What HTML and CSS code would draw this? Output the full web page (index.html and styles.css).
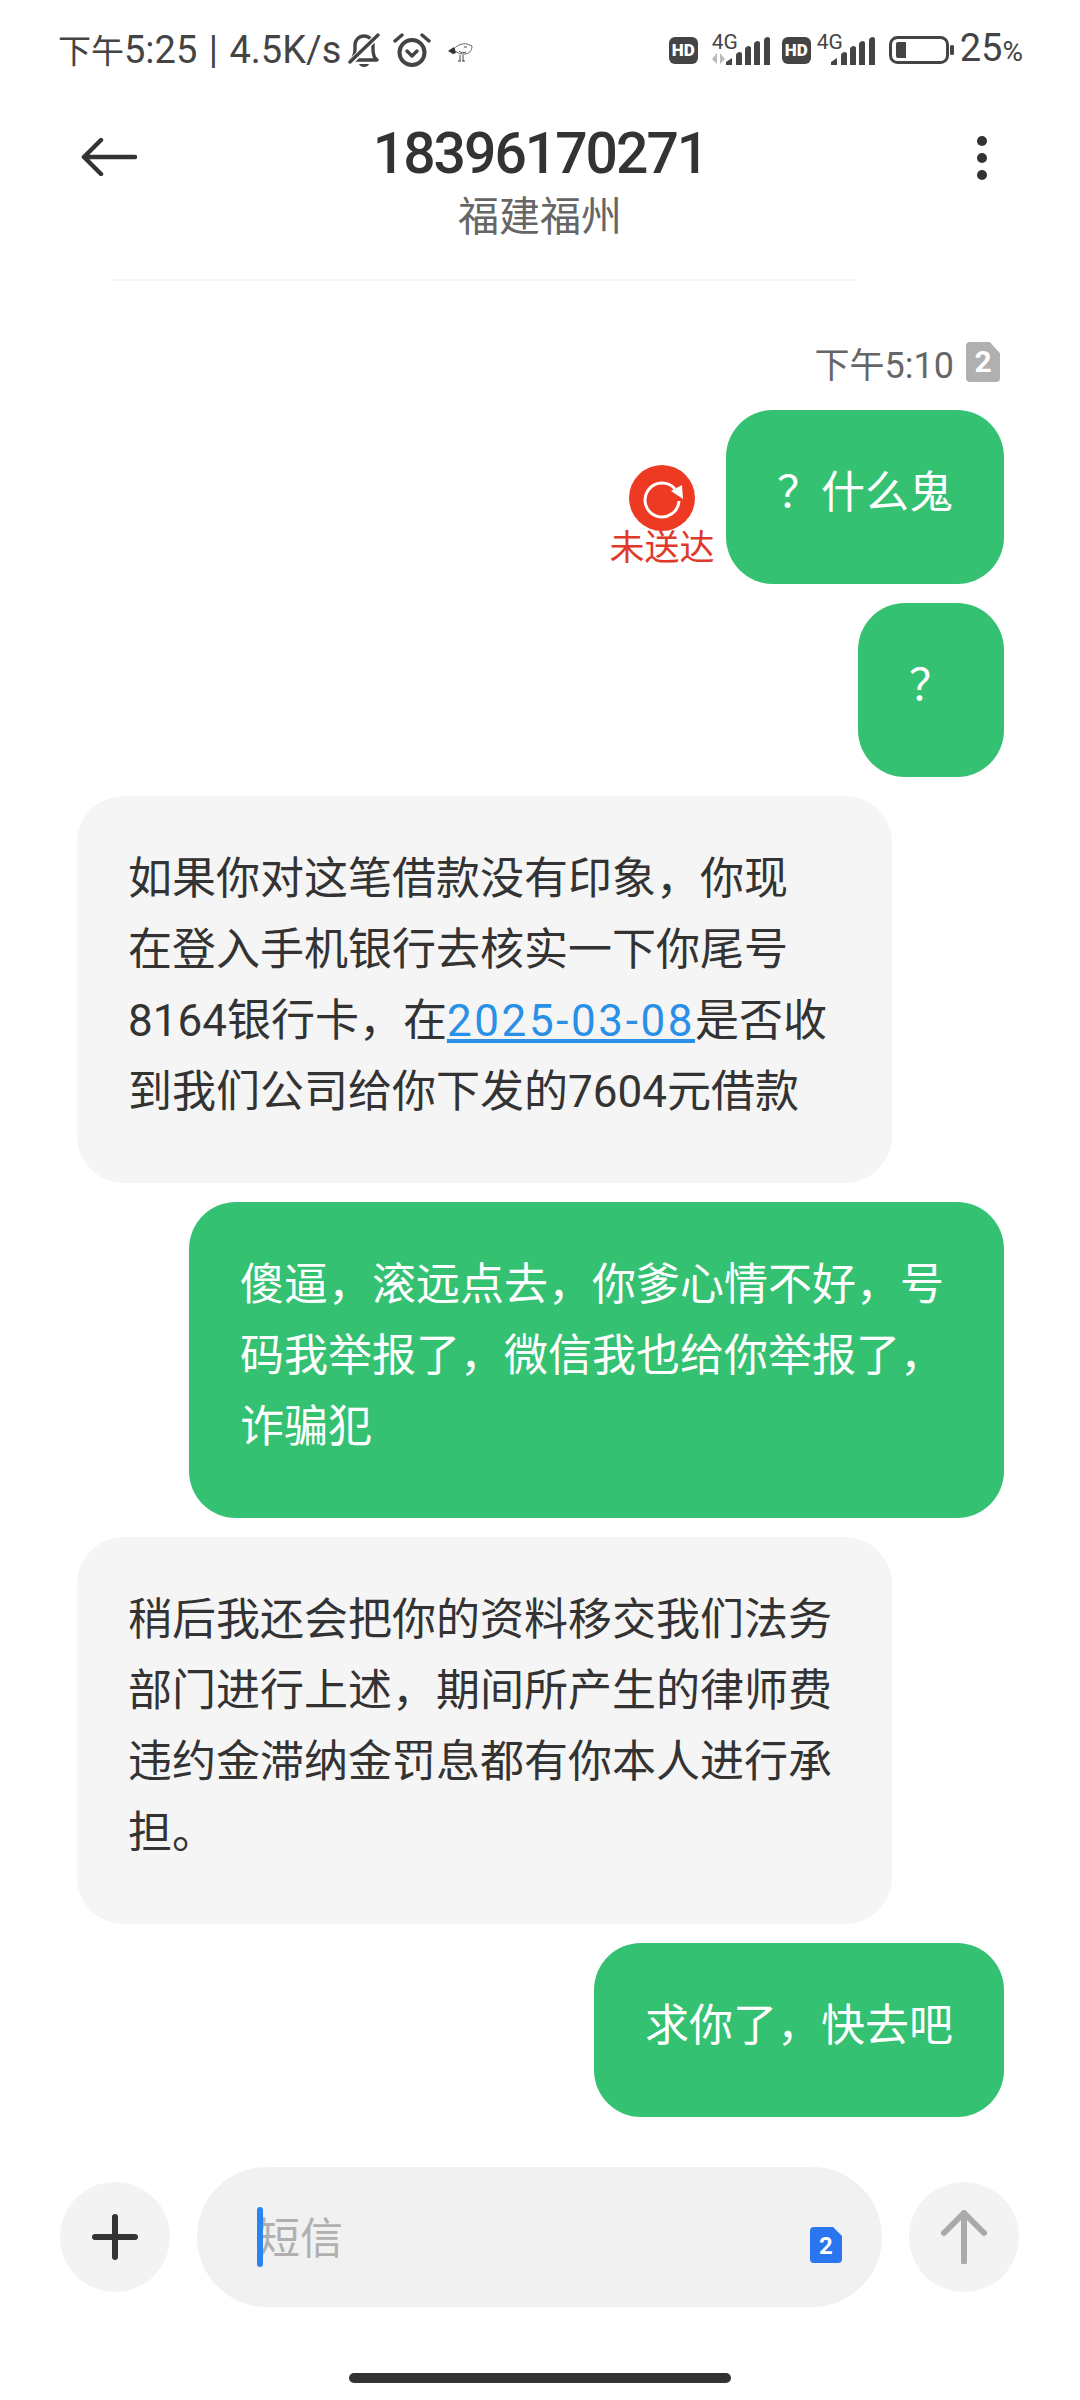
FILE: index.html
```html
<!DOCTYPE html>
<html lang="zh-CN">
<head>
    <meta charset="UTF-8">
    <meta name="viewport" content="width=device-width, initial-scale=1.0">
    <title>18396170271</title>
    <link rel="stylesheet" href="styles.css">
</head>
<body>
    <div class="status-bar">
        <div class="status-left">
            <span class="status-text"><span class="status-cjk">下午</span>5:25 | 4.5K/s</span>
            <svg class="icon-bell" viewBox="0 0 32 35" width="32" height="35">
                <path d="M3 27c3-2 4-5 4-11V12c0-5 4-9 9-9s9 4 9 9v4c0 6 1 9 4 11z" fill="none" stroke="#444" stroke-width="3.4" stroke-linejoin="round"/>
                <path d="M11 31h10c-1 4-9 4-10 0z" fill="#444"/>
                <path d="M2 30L30 2" stroke="#fff" stroke-width="6"/>
                <path d="M2 29L30 2" stroke="#444" stroke-width="3.4" stroke-linecap="round"/>
            </svg>
            <svg class="icon-alarm" viewBox="0 0 38 34" width="38" height="34">
                <circle cx="19" cy="19.500" r="12.500" fill="none" stroke="#444" stroke-width="4"/>
                <path d="M14 18l5 5 5-5" fill="none" stroke="#444" stroke-width="3.4" stroke-linecap="round" stroke-linejoin="round"/>
                <path d="M2 8l7-6M36 8l-7-6" stroke="#444" stroke-width="3.4" stroke-linecap="round"/>
            </svg>
            <svg class="icon-bird" viewBox="0 0 25 20" width="25" height="20">
                <path d="M6 7c3-4 9-6 13-5l5 2c0 5-3 8-8 8-4 0-8-1-10-5z" fill="#fff" stroke="#666" stroke-width="1"/>
                <path d="M0 9l6-4 2 6-3 1z" fill="#333"/>
                <path d="M16 5h3M11 9c2 2 5 2 7 1M12 13v6M15 13v6M10 19h3M14 19h3" fill="none" stroke="#444" stroke-width="1"/>
            </svg>
        </div>
        <div class="status-right">
            <span class="hd-badge">HD</span>
            <div class="signal signal-first">
                <span class="net-label">4G</span>
                <svg class="net-arrows" viewBox="0 0 14 11" width="14" height="11">
                    <path d="M0 6l5-6v11zM8 0v11l5-5z" fill="#bbb"/>
                </svg>
                <svg class="bars" viewBox="0 0 44 28" width="44" height="28">
                    <path d="M0 28v-3l6-4v7zM10 28V18q0-2 3-3 3 0 3 2v11zM19 28V12q0-2 3-3 3 0 3 2v17zM28 28V7q0-2 3-3 3 0 3 2v22zM38 28V3q0-2 3-3 3 0 3 2v26z" fill="#444"/>
                </svg>
            </div>
            <span class="hd-badge">HD</span>
            <div class="signal">
                <span class="net-label">4G</span>
                <svg class="bars" viewBox="0 0 44 28" width="44" height="28">
                    <path d="M0 28v-3l6-4v7zM10 28V18q0-2 3-3 3 0 3 2v11zM19 28V12q0-2 3-3 3 0 3 2v17zM28 28V7q0-2 3-3 3 0 3 2v22zM38 28V3q0-2 3-3 3 0 3 2v26z" fill="#444"/>
                </svg>
            </div>
            <svg class="battery" viewBox="0 0 65 28" width="65" height="28">
                <rect x="1.500" y="1.500" width="57" height="25" rx="7" fill="none" stroke="#444" stroke-width="3"/>
                <path d="M7 8q0-2 2-2h8v16H9q-2 0-2-2z" fill="#444"/>
                <rect x="61" y="9" width="4" height="10" rx="1.500" fill="#444"/>
            </svg>
            <span class="battery-text">25<small>%</small></span>
        </div>
    </div>

    <div class="top-bar">
        <svg class="back-icon" viewBox="0 0 56 38" width="56" height="38">
            <path d="M54 19H3M20 2L3 19l17 17" fill="none" stroke="#333" stroke-width="4.5" stroke-linecap="round" stroke-linejoin="round"/>
        </svg>
        <div class="contact">
            <div class="contact-number">18396170271</div>
            <div class="contact-place">福建福州</div>
        </div>
        <div class="more-icon"><i></i><i></i><i></i></div>
    </div>
    <div class="divider"></div>

    <div class="messages">
        <div class="timestamp">
            <span><span class="time-cjk">下午</span>5:10</span>
            <span class="sim-tag">2</span>
        </div>

        <div class="row row-out">
            <div class="failed">
                <svg class="retry-icon" viewBox="0 0 66 66" width="66" height="66">
                    <circle cx="33" cy="33" r="33" fill="#ee3a22"/>
                    <path d="M46 24A17 17 0 1 0 50 36" fill="none" stroke="#fff" stroke-width="3"/>
                    <path d="M42 26l11-6 1 14z" fill="#fff"/>
                </svg>
                <span class="failed-text">未送达</span>
            </div>
            <div class="bubble bubble-out">？什么鬼</div>
        </div>

        <div class="row row-out">
            <div class="bubble bubble-out">？</div>
        </div>

        <div class="row">
            <div class="bubble bubble-in bubble-wide">如果你对这笔借款没有印象，你现<br>在登入手机银行去核实一下你尾号<br>8164银行卡，在<a class="msg-link">2025-03-08</a>是否收<br>到我们公司给你下发的7604元借款</div>
        </div>

        <div class="row row-out">
            <div class="bubble bubble-out bubble-wide">傻逼，滚远点去，你爹心情不好，号<br>码我举报了，微信我也给你举报了，<br>诈骗犯</div>
        </div>

        <div class="row">
            <div class="bubble bubble-in bubble-wide">稍后我还会把你的资料移交我们法务<br>部门进行上述，期间所产生的律师费<br>违约金滞纳金罚息都有你本人进行承<br>担。</div>
        </div>

        <div class="row row-out">
            <div class="bubble bubble-out">求你了，快去吧</div>
        </div>
    </div>

    <div class="composer">
        <div class="round-btn">
            <svg viewBox="0 0 46 46" width="46" height="46">
                <path d="M23 3v40M3 23h40" stroke="#333" stroke-width="6" stroke-linecap="round"/>
            </svg>
        </div>
        <div class="input-box">
            <i class="caret"></i>
            <span class="placeholder">短信</span>
            <svg class="sim-blue" viewBox="0 0 32 36" width="32" height="36">
                <path d="M4 0h19l9 9v23q0 4-4 4H4q-4 0-4-4V4q0-4 4-4z" fill="#2a76f0"/>
                <text x="16" y="27" text-anchor="middle" class="sim-blue-num">2</text>
            </svg>
        </div>
        <div class="round-btn">
            <svg viewBox="0 0 46 54" width="46" height="54">
                <path d="M23 52V3M3 23L23 3l20 20" fill="none" stroke="#aaa" stroke-width="6" stroke-linecap="round" stroke-linejoin="round"/>
            </svg>
        </div>
    </div>

    <div class="home-bar"></div>
</body>
</html>
```

FILE: styles.css
```css
* {
    box-sizing: border-box;
}

body {
    margin: 0;
    width: 1080px;
    height: 2400px;
    background-color: #fff;
    color: #333;
    font-family: Roboto, "Noto Sans CJK SC", sans-serif;
    overflow: hidden;
}

/* status bar */
.status-bar {
    display: flex;
    justify-content: space-between;
    align-items: center;
    height: 100px;
    padding: 0 57px 0 58px;
    color: #444;
}

.status-left,
.status-right {
    display: flex;
    align-items: center;
}

.status-text {
    margin-top: 2px;
    font-size: 38px;
    line-height: 40px;
    white-space: pre;
    word-spacing: 2px;
}

.status-cjk {
    font-size: 33px;
}

.icon-bell {
    margin-left: 7px;
}

.icon-alarm {
    margin-left: 13px;
}

.icon-bird {
    margin-left: 17px;
    margin-top: 3px;
}

.hd-badge {
    width: 29px;
    height: 27px;
    border-radius: 6px;
    background-color: #444;
    color: #fff;
    font-size: 17px;
    font-weight: 900;
    line-height: 27px;
    text-align: center;
}

.signal {
    position: relative;
    width: 58px;
    height: 30px;
    margin: 0 12px 0 6px;
}

.signal-first {
    margin-left: 14px;
}

.net-label {
    position: absolute;
    left: 0;
    top: -4px;
    font-size: 21px;
    line-height: 22px;
}

.net-arrows {
    position: absolute;
    left: 0;
    top: 18px;
}

.bars {
    position: absolute;
    right: 0;
    bottom: 0;
}

.battery {
    margin-left: 2px;
}

.battery-text {
    margin-left: 6px;
    font-size: 38px;
    line-height: 40px;
}

.battery-text small {
    font-size: 28px;
}

/* header */
.top-bar {
    display: grid;
    grid-template-columns: 1fr auto 1fr;
    align-items: start;
    height: 179px;
    padding: 0 93px 0 81px;
}

.back-icon {
    margin-top: 38px;
}

.contact {
    text-align: center;
    transform: translateX(6px);
}

.contact-number {
    margin-top: 21px;
    font-size: 57px;
    font-weight: 500;
    line-height: 66px;
    letter-spacing: -2px;
}

.contact-place {
    margin-top: 6px;
    font-size: 41px;
    line-height: 48px;
    color: #666;
}

.more-icon {
    display: flex;
    flex-direction: column;
    gap: 7px;
    justify-self: end;
    margin-top: 36px;
}

.more-icon i {
    display: block;
    width: 10px;
    height: 10px;
    border-radius: 50%;
    background-color: #333;
}

.divider {
    height: 2px;
    margin: 0 225px 0 113px;
    background-color: #f4f4f4;
}

/* messages */
.messages {
    display: flex;
    flex-direction: column;
    gap: 19px;
    padding: 0 76px 0 77px;
}

.timestamp {
    display: flex;
    justify-content: flex-end;
    align-items: center;
    gap: 12px;
    height: 44px;
    margin-top: 59px;
    margin-bottom: 7px;
    padding-right: 4px;
    font-size: 36px;
    color: #666;
}

.time-cjk {
    font-size: 35px;
}

.sim-tag {
    width: 34px;
    height: 40px;
    border-radius: 4px;
    background-color: #b0b0b0;
    color: #fff;
    font-size: 30px;
    font-weight: 700;
    line-height: 40px;
    text-align: center;
    clip-path: polygon(0 0, 70% 0, 100% 28%, 100% 100%, 0 100%);
}

.row {
    display: flex;
    align-items: flex-end;
}

.row-out {
    justify-content: flex-end;
}

.bubble {
    padding: 48px 51px 55px;
    border-radius: 47px;
    font-size: 44px;
    line-height: 71px;
    white-space: nowrap;
}

.bubble-wide {
    width: 815px;
}

.bubble-in {
    background-color: #f5f5f5;
    color: #333;
}

.bubble-out {
    background-color: #34c172;
    color: #fff;
}

.msg-link {
    color: #2a8fe6;
    text-decoration: underline;
    letter-spacing: 2.6px;
}

.failed {
    display: flex;
    flex-direction: column;
    align-items: center;
    flex: none;
    width: 104px;
    margin-right: 12px;
    margin-bottom: 18px;
}

.failed-text {
    font-size: 35px;
    line-height: 35px;
    color: #e0392a;
    white-space: nowrap;
}

/* composer */
.composer {
    display: flex;
    align-items: center;
    gap: 27px;
    margin-top: 50px;
    padding: 0 61px 0 60px;
}

.round-btn {
    display: flex;
    justify-content: center;
    align-items: center;
    flex: none;
    width: 110px;
    height: 110px;
    border-radius: 50%;
    background-color: #f3f3f3;
}

.input-box {
    position: relative;
    display: flex;
    justify-content: space-between;
    align-items: center;
    flex: 1;
    height: 140px;
    padding: 0 40px 0 60px;
    border-radius: 70px;
    background-color: #f1f1f1;
}

.caret {
    position: absolute;
    left: 60px;
    top: 40px;
    width: 6px;
    height: 60px;
    border-radius: 3px;
    background-color: #2a86ee;
}

.placeholder {
    margin-bottom: 5px;
    font-size: 43px;
    color: #b0b0b0;
}

.sim-blue {
    margin-top: 16px;
}

.sim-blue-num {
    fill: #fff;
    font-size: 24px;
    font-weight: 700;
}

.home-bar {
    width: 382px;
    height: 10px;
    margin: 66px auto 0;
    border-radius: 5px;
    background-color: #333;
}
```
